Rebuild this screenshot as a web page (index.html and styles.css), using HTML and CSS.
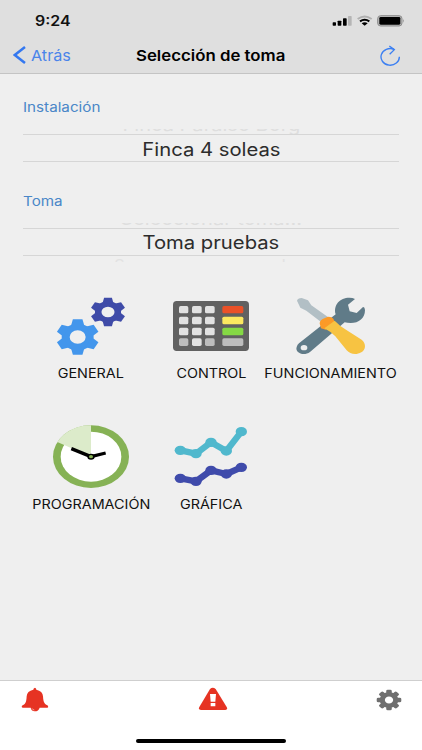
FILE: index.html
```html
<!DOCTYPE html>
<html lang="es">
<head>
    <meta charset="UTF-8">
    <title>Selección de toma</title>
    <link rel="stylesheet" href="styles.css">
</head>
<body>

<header>
    <div class="status-bar">
        <span class="wide time">9:24</span>
        <svg class="status-icons" viewBox="360 39 225 45" width="75" height="15">
            <rect x="365" y="67" width="10" height="10" rx="2"/>
            <rect x="380" y="62" width="11" height="15" rx="2"/>
            <rect x="396" y="55" width="11" height="22" rx="2"/>
            <rect x="411" y="48" width="11" height="29" rx="2" fill="#b5b5b5"/>
            <path d="M440 57Q461 42 482 57" fill="none" stroke="#b0b0b0" stroke-width="6"/>
            <path d="M447 64Q461 54 475 64" fill="none" stroke="#000" stroke-width="6"/>
            <path d="M452 70Q461 63 470 70L461 77Z"/>
            <rect x="500" y="47" width="73" height="31" rx="9" fill="#b8b8b8" stroke="#8d8d8d" stroke-width="3"/>
            <rect x="505" y="51" width="63" height="23" rx="4"/>
            <path d="M576 57Q580 62 576 68Z" fill="#777"/>
        </svg>
    </div>
    <nav class="nav-bar">
        <a class="back">
            <svg viewBox="0 0 13 18" width="13" height="18"><path d="M12 1L1.800 9L12 17" fill="none" stroke="#3478f0" stroke-width="2.5"/></svg>
            <span class="wide back-text">Atrás</span>
        </a>
        <h1 class="wide">Selección de toma</h1>
        <svg class="reload" viewBox="507 130 63 63" width="21" height="21">
            <path d="M565 165A27.500 25 0 1 1 549 143" fill="none" stroke="#3b7ff2" stroke-width="4"/>
            <path d="M535 133L550 144L536 158" fill="none" stroke="#3b7ff2" stroke-width="4"/>
        </svg>
    </nav>
</header>

<main>
    <section class="field">
        <label><span class="wide label-text">Instalación</span></label>
        <div class="ghost"><span class="wide">Finca Paraiso Borg</span></div>
        <div class="selected"><span class="wide">Finca 4 soleas</span></div>
        <div class="ghost-below"></div>
    </section>
    <section class="field">
        <label><span class="wide label-text">Toma</span></label>
        <div class="ghost"><span class="wide">Seleccionar toma...</span></div>
        <div class="selected"><span class="wide">Toma pruebas</span></div>
        <div class="ghost-below"><span class="wide">S</span><span class="wide">l</span></div>
    </section>

    <div class="menu">
        <a class="item">
            <svg viewBox="-27 21 360 204" width="120" height="68">
                <defs>
                    <path id="tooth" d="M-17 -32L-12 -53H12L17 -32Z"/>
                    <g id="cog">
                        <circle r="30" fill="none" stroke="currentColor" stroke-width="20"/>
                        <g fill="currentColor">
                            <use href="#tooth"/>
                            <use href="#tooth" transform="rotate(60)"/>
                            <use href="#tooth" transform="rotate(120)"/>
                            <use href="#tooth" transform="rotate(180)"/>
                            <use href="#tooth" transform="rotate(240)"/>
                            <use href="#tooth" transform="rotate(300)"/>
                        </g>
                    </g>
                </defs>
                <use href="#cog" color="#4396ec" transform="translate(113 156) scale(1.2 1)"/>
                <use href="#cog" color="#3f4ba8" transform="translate(204 81) scale(.98 .8)"/>
            </svg>
            <span class="wide">GENERAL</span>
        </a>
        <a class="item">
            <svg viewBox="-27 21 360 204" width="120" height="68">
                <rect x="39" y="48" width="228" height="150" rx="11" fill="#616161"/>
                <g fill="#e2e2e2">
                    <rect x="57" y="63" width="28" height="22" rx="5"/>
                    <rect x="96" y="63" width="29" height="22" rx="5"/>
                    <rect x="135" y="63" width="29" height="22" rx="5"/>
                    <rect x="57" y="95" width="28" height="23" rx="5"/>
                    <rect x="96" y="95" width="29" height="23" rx="5"/>
                    <rect x="135" y="95" width="29" height="23" rx="5"/>
                    <rect x="57" y="128" width="28" height="23" rx="5"/>
                    <rect x="96" y="128" width="29" height="23" rx="5"/>
                    <rect x="135" y="128" width="29" height="23" rx="5"/>
                    <rect x="96" y="160" width="29" height="23" rx="5"/>
                </g>
                <g fill="#bdbdbd">
                    <rect x="57" y="160" width="28" height="23" rx="5"/>
                    <rect x="135" y="160" width="29" height="23" rx="5"/>
                    <rect x="187" y="160" width="63" height="23" rx="5"/>
                </g>
                <rect x="187" y="63" width="63" height="22" rx="5" fill="#ea5128"/>
                <rect x="187" y="95" width="63" height="23" rx="5" fill="#fbe960"/>
                <rect x="187" y="128" width="63" height="23" rx="5" fill="#85d944"/>
            </svg>
            <span class="wide">CONTROL</span>
        </a>
        <a class="item">
            <svg viewBox="33 21 360 204" width="120" height="68">
                <path d="M117 175L227 88C219 60 240 38 268 38Q278 38 285 42L264 59L269 79L290 84L309 66Q314 65 315 75C315 100 297 114 272 114Q262 114 254 112L150 201C131 215 104 203 110 186Q112 179 117 175Z" fill="#607b88"/>
                <ellipse cx="132" cy="188" rx="10" ry="8" fill="#eee"/>
                <path d="M111 47Q113 39 125 39L144 46L154 61L207 98L188 115L139 77L121 68Z" fill="#b2bfc5"/>
                <path d="M180 119Q176 110 188 102L204 95Q220 95 222 106L225 114L197 134L183 130Z" fill="#fb9a27"/>
                <path d="M193 130L224 107Q238 122 258 134L305 164C319 176 318 193 304 202C289 211 270 208 260 196L226 154Q211 139 193 130Z" fill="#f7c342"/>
            </svg>
            <span class="wide">FUNCIONAMIENTO</span>
        </a>
        <a class="item">
            <svg viewBox="33 24 360 204" width="120" height="68">
                <ellipse cx="213" cy="125" rx="114" ry="94" fill="#86b255"/>
                <ellipse cx="213" cy="125" rx="91" ry="75" fill="#fff"/>
                <path d="M213 125V31A114 94 0 0 0 112 81Z" fill="#dcebca"/>
                <path d="M213 125L154 101M213 125L257 114" stroke="#000" stroke-width="10"/>
                <ellipse cx="213" cy="125" rx="11" ry="9"/>
                <ellipse cx="213" cy="125" rx="6" ry="5" fill="#86b255"/>
            </svg>
            <span class="wide">PROGRAMACIÓN</span>
        </a>
        <a class="item">
            <svg viewBox="-27 24 360 204" width="120" height="68">
                <g fill="none" stroke-width="19" stroke-linejoin="round">
                    <path d="M61 106L108 116L153 82L199 108L244 50" stroke="#50b8cd"/>
                    <path d="M61 190L108 199L153 166L199 177L244 157" stroke="#3f4bab"/>
                </g>
                <g fill="#50b8cd">
                    <ellipse cx="61" cy="106" rx="17" ry="14"/>
                    <ellipse cx="108" cy="116" rx="17" ry="14"/>
                    <ellipse cx="153" cy="82" rx="17" ry="14"/>
                    <ellipse cx="199" cy="108" rx="17" ry="14"/>
                    <ellipse cx="244" cy="50" rx="17" ry="14"/>
                </g>
                <g fill="#3f4bab">
                    <ellipse cx="61" cy="190" rx="17" ry="14"/>
                    <ellipse cx="108" cy="199" rx="17" ry="14"/>
                    <ellipse cx="153" cy="166" rx="17" ry="14"/>
                    <ellipse cx="199" cy="177" rx="17" ry="14"/>
                    <ellipse cx="244" cy="157" rx="17" ry="14"/>
                </g>
            </svg>
            <span class="wide">GRÁFICA</span>
        </a>
    </div>
</main>

<footer>
    <div class="toolbar">
        <svg viewBox="63 51 84 75" width="28" height="25">
            <path d="M105 53Q109 54 109 59Q128 63 129 79C130 98 134 103 144 107Q146 113 142 113H119Q116 124 104 124Q93 122 92 113H68Q63 112 66 107C76 103 79 98 80 79Q81 63 100 59Q100 54 105 53Z" fill="#e63323"/>
            <path d="M96 115Q98 120 103 120" fill="none" stroke="#fff" stroke-width="1.500"/>
        </svg>
        <svg viewBox="174 51 90 72" width="30" height="24">
            <path d="M210 57Q218 49 227 57L260 111Q264 119 256 120H183Q174 119 178 111Z" fill="#e63323"/>
            <path d="M210 72H228L226 95H212ZM212 99H226V109H212Z" fill="#fff"/>
        </svg>
        <svg class="settings" viewBox="109 56 78 66" width="26" height="22">
            <defs><rect id="pin" x="-7" y="-31" width="14" height="18" rx="4"/></defs>
            <g transform="translate(148 89) scale(1.190 1)" fill="#6f6f6f">
                <circle r="17" fill="none" stroke="#6f6f6f" stroke-width="13"/>
                <use href="#pin" transform="rotate(0)"/>
                <use href="#pin" transform="rotate(45)"/>
                <use href="#pin" transform="rotate(90)"/>
                <use href="#pin" transform="rotate(135)"/>
                <use href="#pin" transform="rotate(180)"/>
                <use href="#pin" transform="rotate(225)"/>
                <use href="#pin" transform="rotate(270)"/>
                <use href="#pin" transform="rotate(315)"/>
            </g>
        </svg>
    </div>
    <div class="home-indicator"></div>
</footer>

</body>
</html>
```
FILE: styles.css
```css
* {
    margin: 0;
    box-sizing: border-box;
    font-family: Inter, "Liberation Sans", sans-serif;
}

body {
    display: flex;
    flex-direction: column;
    height: 100vh;
    overflow: hidden;
    background-color: #efefef;
    color: #111;
}

svg {
    display: block;
    flex: none;
}

/* stretched lettering */
.wide {
    display: inline-block;
    white-space: nowrap;
    transform: scaleX(1.15);
}

header {
    height: 74px;
    background-color: #dfdfdf;
    border-bottom: 1px solid #c4c4c4;
}

.status-bar {
    display: flex;
    justify-content: space-between;
    align-items: center;
    height: 41px;
    padding: 0 16px 0 35px;
}

.time {
    font-size: 14px;
    font-weight: 600;
    transform: scaleX(1.14);
    transform-origin: left;
}

.nav-bar {
    display: grid;
    grid-template-columns: 1fr auto 1fr;
    align-items: center;
    height: 28px;
    padding: 0 21px 0 13px;
}

.back {
    display: flex;
    align-items: center;
    gap: 5px;
    color: #4a84ea;
}

.back-text {
    font-size: 15px;
    transform: scaleX(1.08);
    transform-origin: left;
}

h1 {
    font-size: 15px;
    font-weight: 600;
    color: #000;
}

h1.wide {
    transform: translateX(4px) scaleX(1.12);
}

.reload {
    justify-self: end;
}

main {
    flex: 1;
    padding: 24px 23px 0;
}

.field {
    height: 93.5px;
}

label {
    display: block;
    height: 31px;
    font-size: 13px;
    line-height: 18px;
    color: #4a87c8;
}

.label-text {
    transform: scaleX(1.17);
    transform-origin: left;
}

.ghost {
    display: flex;
    justify-content: center;
    align-items: flex-end;
    height: 5px;
    overflow: hidden;
    font-size: 17px;
    line-height: 20px;
    color: #dedede;
}

.ghost .wide {
    margin-bottom: -1px;
    transform: scaleX(1.18);
}

.selected {
    display: flex;
    align-items: center;
    justify-content: center;
    height: 28px;
    padding-top: 2px;
    border-top: 1px solid #d6d6d6;
    border-bottom: 1px solid #d6d6d6;
    font-size: 18px;
    color: #2c2c2c;
}

.selected .wide {
    transform: scaleX(1.125);
}

.ghost-below {
    display: flex;
    justify-content: space-between;
    height: 6px;
    padding: 0 114px 0 92px;
    overflow: hidden;
    font-size: 14px;
    line-height: 18px;
    color: #e2e2e2;
}

.menu {
    display: grid;
    grid-template-columns: repeat(3, 120px);
    grid-auto-rows: 131px;
    margin: 7px 0 0 8px;
}

.item {
    display: flex;
    flex-direction: column;
    align-items: center;
    gap: 6px;
    font-size: 12.5px;
    line-height: 16px;
}

footer {
    display: flex;
    flex-direction: column;
    justify-content: space-between;
    align-items: center;
    height: 70px;
    padding: 6px 0 7px;
    background-color: white;
    border-top: 1px solid #cfcfcf;
}

.toolbar {
    display: flex;
    justify-content: space-between;
    width: 100%;
    padding: 0 20px 0 21px;
}

.settings {
    margin-top: 2px;
}

.home-indicator {
    width: 150px;
    height: 4px;
    border-radius: 2px;
    background-color: black;
}
```
